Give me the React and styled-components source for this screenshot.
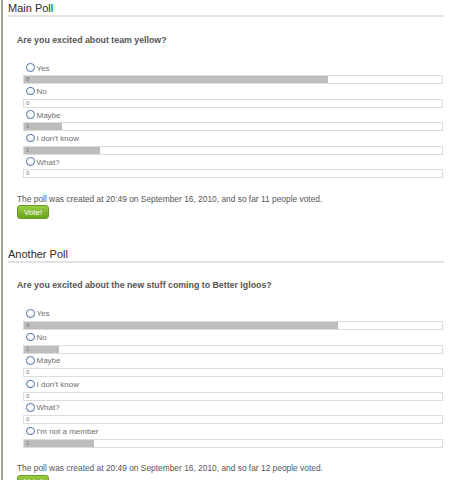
import React from "react";
import styled, { createGlobalStyle } from "styled-components";

const Global = createGlobalStyle`
  html, body { margin: 0; padding: 0; background: #fff; }
  body { font-family: "Liberation Sans", Arial, sans-serif; }
`;

const Page = styled.div`
  margin-left: 1px;
  border-left: 2px solid #a7a193;
  padding: 2px 8px 20px 5px;
  min-height: 480px;
  box-sizing: border-box;
`;

const Section = styled.section`
  & + & { margin-top: 29px; }
`;

const Heading = styled.h2`
  margin: 0;
  font-size: 11px;
  line-height: 13px;
  font-weight: normal;
  color: #2b2b2b;
  border-bottom: 2px solid #e2e2e2;
`;

const Question = styled.h3`
  margin: 17.5px 0 0 9px;
  font-size: 8.8px;
  line-height: 11px;
  font-weight: bold;
  color: #555;
`;

const Options = styled.div`
  margin: 15.3px 1px 0 15px;
  display: flex;
  flex-direction: column;
`;

const Label = styled.label`
  display: flex;
  align-items: center;
  height: 14.5px;
  padding-left: 3px;
  font-size: 8px;
  color: #6e6e6e;
  gap: 2px;
`;

const Radio = styled.span`
  width: 6.5px;
  height: 6.5px;
  border: 1.2px solid #4f74a8;
  border-radius: 50%;
  background: radial-gradient(circle at 50% 35%, #fff 40%, #e1e7f0 100%);
  margin-top: -1px;
`;

const Bar = styled.div`
  height: 9px;
  box-sizing: border-box;
  border: 1px solid #dcdcdc;
  background: linear-gradient(
    to right,
    #bdbdbd ${(p) => p.$pct}%,
    #fff ${(p) => p.$pct}%
  );
  font-size: 6px;
  line-height: 7px;
  color: #7a7a7a;
  padding-left: 2px;
`;

const Footer = styled.p`
  margin: 15.4px 0 0 9px;
  font-size: 8.4px;
  line-height: 10px;
  color: #555;
`;

const VoteButton = styled.button`
  margin: 1.8px 0 0 9px;
  width: 32px;
  height: 13.3px;
  padding: 0;
  border: 1px solid #6b9d22;
  border-radius: 3px;
  background: linear-gradient(#9acd45, #6aa21b);
  color: #fff;
  font-family: "Liberation Sans", Arial, sans-serif;
  font-size: 8px;
  line-height: 11px;
  display: block;
`;

const polls = [
  {
    title: "Main Poll",
    question: "Are you excited about team yellow?",
    total: 11,
    options: [
      ["Yes", 8],
      ["No", 0],
      ["Maybe", 1],
      ["I don't know", 2],
      ["What?", 0],
    ],
  },
  {
    title: "Another Poll",
    question: "Are you excited about the new stuff coming to Better Igloos?",
    total: 12,
    options: [
      ["Yes", 9],
      ["No", 1],
      ["Maybe", 0],
      ["I don't know", 0],
      ["What?", 0],
      ["I'm not a member", 2],
    ],
  },
];

function Poll({ poll }) {
  return (
    <Section>
      <Heading>{poll.title}</Heading>
      <Question>{poll.question}</Question>
      <Options>
        {poll.options.map(([label, count]) => (
          <React.Fragment key={label}>
            <Label>
              <Radio />
              {label}
            </Label>
            <Bar $pct={(count / poll.total) * 100}>{count}</Bar>
          </React.Fragment>
        ))}
      </Options>
      <Footer>
        The poll was created at 20:49 on September 16, 2010, and so far{" "}
        {poll.total} people voted.
      </Footer>
      <VoteButton>Vote!</VoteButton>
    </Section>
  );
}

export default function App() {
  return (
    <>
      <Global />
      <Page>
        {polls.map((p) => (
          <Poll key={p.title} poll={p} />
        ))}
      </Page>
    </>
  );
}
